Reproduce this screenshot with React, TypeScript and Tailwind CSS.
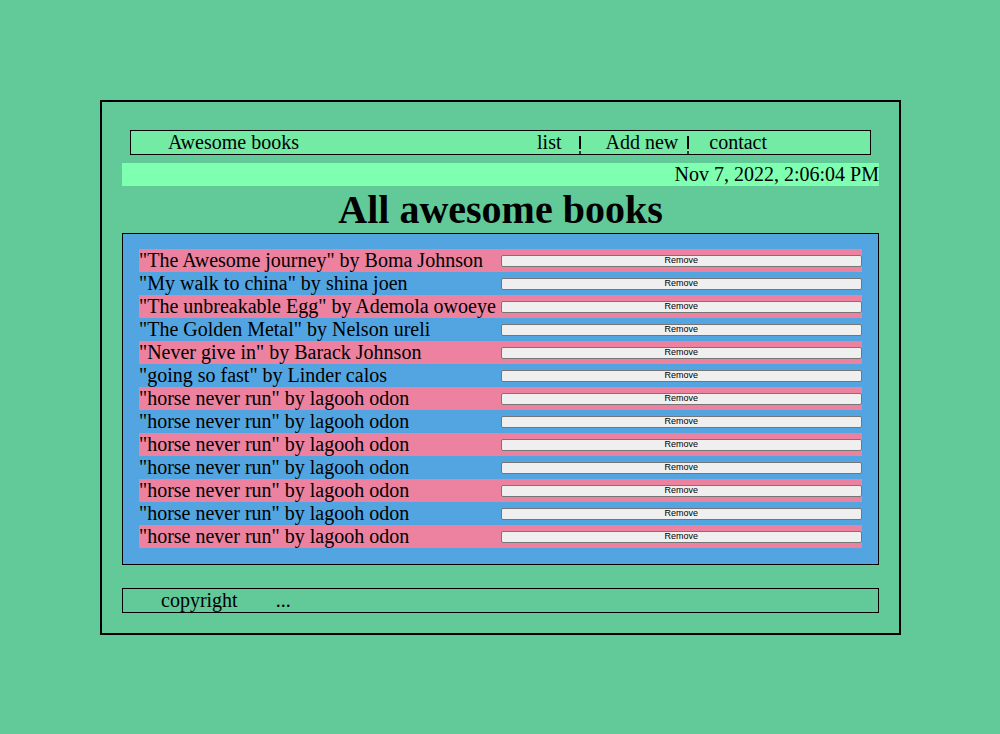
const books = [
  { title: "The Awesome journey", author: "Boma Johnson" },
  { title: "My walk to china", author: "shina joen" },
  { title: "The unbreakable Egg", author: "Ademola owoeye" },
  { title: "The Golden Metal", author: "Nelson ureli" },
  { title: "Never give in", author: "Barack Johnson" },
  { title: "going so fast", author: "Linder calos" },
  { title: "horse never run", author: "lagooh odon" },
  { title: "horse never run", author: "lagooh odon" },
  { title: "horse never run", author: "lagooh odon" },
  { title: "horse never run", author: "lagooh odon" },
  { title: "horse never run", author: "lagooh odon" },
  { title: "horse never run", author: "lagooh odon" },
  { title: "horse never run", author: "lagooh odon" },
];

function Separator() {
  return (
    <span className="relative flex h-[23px] w-[2px] flex-col items-center">
      <span className="mt-[5px] h-[15px] w-[2px] bg-black" />
      <span className="mt-[2px] h-[3px] w-[2px] bg-[#1f4a34]" />
    </span>
  );
}

export default function App() {
  return (
    <div className="min-h-[734px] bg-[#62c998] pt-[100px] pb-[99px] text-[20px] text-black [font-family:'Liberation_Serif',serif]">
      <div className="ml-[100px] w-[801px] border-2 border-black px-[20px] pt-[20px] pb-[20px]">
        <nav className="m-[8px] flex h-[25px] items-center border border-black bg-[#73eba5] leading-[23px]">
          <span className="ml-[37px]">Awesome books</span>
          <ul className="ml-auto mr-[103px] flex items-center">
            <li>list</li>
            <li className="ml-[18px] mr-[24px]">
              <Separator />
            </li>
            <li>Add new</li>
            <li className="ml-[9px] mr-[20px]">
              <Separator />
            </li>
            <li>contact</li>
          </ul>
        </nav>

        <div className="h-[23px] bg-[#7fffb0] text-right leading-[23px]">
          Nov 7, 2022, 2:06:04 PM
        </div>

        <h1 className="mt-[1px] text-center text-[40px] font-bold leading-[46px]">
          All awesome books
        </h1>

        <div className="border border-black bg-[#52a5e0] px-[16px] pt-[15px] pb-[16px]">
          {books.map((b, i) => (
            <div
              key={i}
              className={
                "grid h-[23px] grid-cols-2 items-center leading-[23px] " +
                (i % 2 === 0 ? "bg-[#ec829f]" : "bg-[#52a5e0]")
              }
            >
              <span className="whitespace-nowrap">
                "{b.title}" by {b.author}
              </span>
              <button className="h-[12px] rounded-[2px] border border-[#767676] bg-[#efefef] text-[9px] leading-[9px] [font-family:'Liberation_Sans',sans-serif]">
                Remove
              </button>
            </div>
          ))}
        </div>

        <footer className="mt-[23px] flex h-[25px] items-center border border-black leading-[23px]">
          <span className="ml-[38px]">copyright</span>
          <span className="ml-[38px]">...</span>
        </footer>
      </div>
    </div>
  );
}
